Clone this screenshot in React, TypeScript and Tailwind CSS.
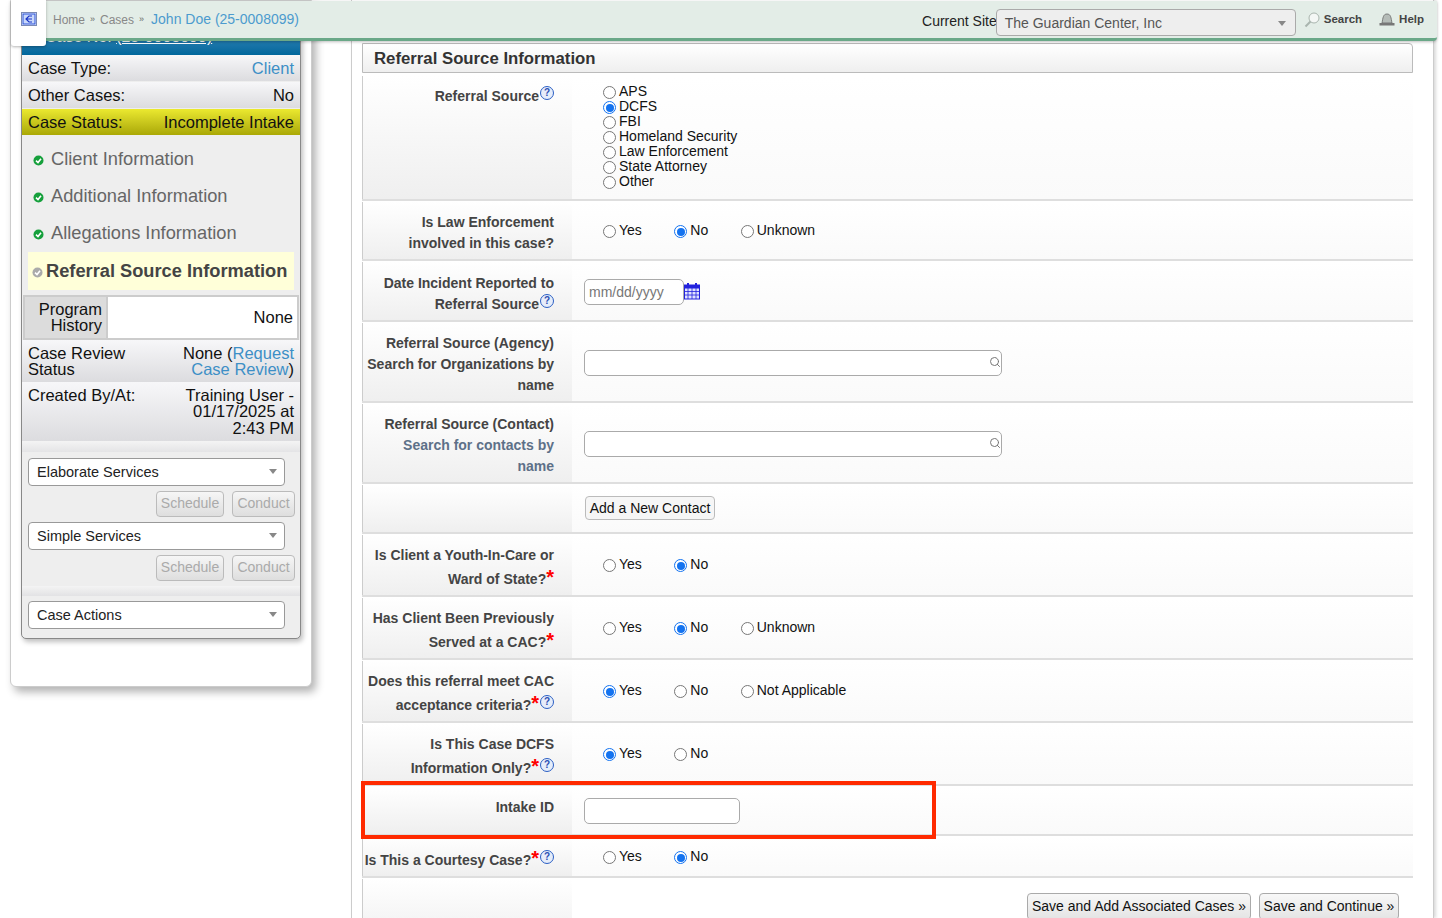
import React from "react";
import { Search } from "lucide-react";

const font = { fontFamily: '"Liberation Sans", Arial, sans-serif' };

function Radio({ on }: { on?: boolean }) {
  return on ? (
    <span className="inline-flex w-[13px] h-[13px] shrink-0 rounded-full bg-white border border-[#1473f0] items-center justify-center">
      <span className="block w-[8px] h-[8px] rounded-full bg-[#1473f0]" />
    </span>
  ) : (
    <span className="inline-block w-[13px] h-[13px] shrink-0 rounded-full bg-white border border-[#777]" />
  );
}

function Opt({ label, on }: { label: string; on?: boolean }) {
  return (
    <span className="flex items-center gap-[3px] text-[14px] leading-[15px] text-[#111]">
      <span className="mt-[2px] flex"><Radio on={on} /></span>
      {label}
    </span>
  );
}

function Options({ items, on, className }: { items: string[]; on: string; className: string }) {
  return (
    <div className={"flex gap-[32.5px] pl-[31px] " + className}>
      {items.map((i) => (
        <Opt key={i} label={i} on={i === on} />
      ))}
    </div>
  );
}

function HelpIcon() {
  return (
    <span className="inline-flex align-top ml-[1px] w-[14px] h-[14px] rounded-full border border-[#2b5fc4] bg-[#e6edfa] text-[#2b4fb4] text-[10px] leading-[12px] font-bold items-center justify-center">
      ?
    </span>
  );
}

function Star() {
  return <span className="inline-block align-top text-[#f00] text-[20px] leading-[16px] font-bold">*</span>;
}

function Row({ h, label, children }: { h: string; label: React.ReactNode; children?: React.ReactNode }) {
  return (
    <div className={"flex border-b-2 border-[#dedede] pt-[1px] " + h}>
      <div className="w-[210px] shrink-0 border-l border-[#ccc] bg-gradient-to-b from-white to-[#efefef] text-right pr-[18px] pl-[1px] text-[14px] leading-[21px] font-bold text-[#444] whitespace-nowrap">
        {label}
      </div>
      <div className="flex-1 bg-gradient-to-b from-white to-[#fafafa] relative">{children}</div>
    </div>
  );
}

function TextBox({ w, className = "", search }: { w: string; className?: string; search?: boolean }) {
  return (
    <div className={"relative ml-[12px] h-[26px] bg-white border border-[#aaa] rounded-[5px] " + w + " " + className}>
      {search && <Search className="absolute right-[0px] top-[5px] w-[12px] h-[12px] text-[#777]" strokeWidth={2} />}
    </div>
  );
}

function Sel({ label }: { label: string }) {
  return (
    <div className="ml-[6px] w-[257px] h-[28px] pt-[2px] bg-white border border-[#999] rounded-[4px] flex items-center justify-between pl-[8px] pr-[7px] text-[14.5px] text-[#222]">
      {label}
      <span className="-mt-[2px] w-0 h-0 border-l-[4px] border-r-[4px] border-t-[5px] border-l-transparent border-r-transparent border-t-[#888]" />
    </div>
  );
}

function DisabledBtns() {
  return (
    <div className="flex justify-end gap-[8px] mt-[5px] pr-[5px]">
      <span className="h-[26px] w-[68px] flex items-center justify-center border border-[#bbb] rounded-[4px] bg-gradient-to-b from-[#f6f6f6] to-[#dedede] text-[14px] text-[#aaa]">Schedule</span>
      <span className="h-[26px] w-[63px] flex items-center justify-center border border-[#bbb] rounded-[4px] bg-gradient-to-b from-[#f6f6f6] to-[#dedede] text-[14px] text-[#aaa]">Conduct</span>
    </div>
  );
}

function Check({ gray }: { gray?: boolean }) {
  return (
    <svg width="11" height="11" viewBox="0 0 11 11" className="shrink-0 mt-[4px]">
      <circle cx="5.5" cy="5.5" r="5" fill={gray ? "#aaa" : "#16a03c"} />
      <path d="M3 5.6 L5 7.5 L8 3.8" fill="none" stroke="#fff" strokeWidth="1.6" />
    </svg>
  );
}

function Nav({ label }: { label: string }) {
  return (
    <div className="h-[37.2px] pl-[11px] flex items-center gap-[7px] text-[18.25px] text-[#666]">
      <Check />
      {label}
    </div>
  );
}

const grey = "bg-gradient-to-b from-[#f7f7f9] to-[#dcdcdf]";

function InfoRow({ l, r }: { l: string; r: React.ReactNode }) {
  return (
    <div className={"h-[26px] mb-[1px] pt-[1px] flex items-center justify-between px-[6px] text-[16.5px] text-[#111] " + grey}>
      <span>{l}</span>
      {r}
    </div>
  );
}

function SidePanel() {
  return (
    <div className="w-[302px] ml-[10px] h-[687px] shrink-0 bg-white border border-[#ccc] rounded-b-[6px] shadow-[4px_5px_8px_rgba(0,0,0,0.3)] pt-[29px] px-[10px]">
      <div className="w-[280px] h-[609px] border border-[#888] rounded-[5px] bg-[#eee] shadow-[2px_3px_5px_rgba(0,0,0,0.25)] overflow-hidden">
        <div className="h-[24px] pl-[23px] bg-gradient-to-b from-[#2e86b8] to-[#00679c] text-white text-[16px] leading-[12px]">
          Case No: <span className="underline">(25-0008099)</span>
        </div>
        <InfoRow l="Case Type:" r={<span className="text-[#3d8fc6]">Client</span>} />
        <InfoRow l="Other Cases:" r={<span>No</span>} />
        <div className="h-[26px] pt-[1px] flex items-center justify-between px-[6px] text-[16.5px] text-[#111] bg-gradient-to-b from-[#ebe92f] to-[#aaa805]">
          <span>Case Status:</span>
          <span>Incomplete Intake</span>
        </div>
        <div className="pt-[5px]">
          <Nav label="Client Information" />
          <Nav label="Additional Information" />
          <Nav label="Allegations Information" />
        </div>
        <div className="ml-[6px] mr-[6px] h-[38px] mb-[5px] bg-[#ffffd9] pl-[4px] flex items-center gap-[3px] text-[18.25px] font-bold text-[#444]">
          <Check gray />
          Referral Source Information
        </div>
        <div className="mx-[1px] h-[45px] flex border-2 border-[#ccc] text-[16.5px] leading-[16px] text-[#111]">
          <div className="w-[81px] bg-[#dcdcdc] text-right pr-[4px] flex items-center justify-end">
            <span>Program<br />History</span>
          </div>
          <div className="flex-1 bg-white flex items-center justify-end pr-[4px] border-l-2 border-[#ccc]">None</div>
        </div>
        <div className={"h-[42px] pt-[5px] flex justify-between px-[6px] text-[16.5px] leading-[16px] text-[#111] " + grey}>
          <span>Case Review<br />Status</span>
          <span className="text-right">None (<span className="text-[#3d8fc6]">Request</span><br /><span className="text-[#3d8fc6]">Case Review</span>)</span>
        </div>
        <div className={"h-[59px] pt-[5px] flex justify-between px-[6px] text-[16.5px] leading-[16.5px] text-[#111] " + grey}>
          <span>Created By/At:</span>
          <span className="text-right">Training User -<br />01/17/2025 at<br />2:43 PM</span>
        </div>
        <div className="h-[11px] bg-gradient-to-b from-[#f4f4f4] to-[#e4e4e6] mb-[6px]" />
        <Sel label="Elaborate Services" />
        <DisabledBtns />
        <div className="h-[5px]" />
        <Sel label="Simple Services" />
        <DisabledBtns />
        <div className="h-[10px] mt-[5px] mb-[5px] bg-gradient-to-b from-[#f4f4f4] to-[#e2e2e4]" />
        <Sel label="Case Actions" />
      </div>
    </div>
  );
}

function TopBar() {
  return (
    <>
      <div className="absolute left-[11px] top-0 w-[35px] h-[46px] bg-white rounded-b-[3px] shadow-[0_1px_3px_rgba(0,0,0,0.3)] z-20 flex items-start justify-center pt-[12px]">
        <svg width="16" height="14" viewBox="0 0 16 14">
          <rect x="0.5" y="0.5" width="15" height="13" fill="#e6ecfc" stroke="#7a8ab5" />
          <rect x="2" y="2" width="12" height="10" fill="#c9d8fa" stroke="#2a52d8" />
          <path d="M11 4 H8 L5 7 L8 10 H11 M5 7 H11" fill="none" stroke="#1a34c8" strokeWidth="1.2" />
        </svg>
      </div>
      <div className="absolute left-[40px] top-[1px] w-[1397px] h-[40px] bg-[#e3ede7] border-b-[3px] border-[#6aa888] rounded-br-[4px] shadow-[0_1px_3px_rgba(0,0,0,0.25)] z-10 flex items-center justify-between pl-[13px] pr-[13px]">
        <div className="flex items-center gap-[5px] text-[12px] text-[#888]">
          <span>Home</span>
          <span className="text-[9px] text-[#666]">»</span>
          <span>Cases</span>
          <span className="text-[9px] text-[#666]">»</span>
          <span className="ml-[2px] text-[14px] text-[#4c9bce]">John Doe (25-0008099)</span>
        </div>
        <div className="flex items-center">
          <span className="mt-[4px] -mr-[1px] text-[14px] text-[#222]">Current Site</span>
          <div className="w-[300px] h-[27px] mt-[6px] pt-[1px] bg-[#eee] border border-[#aaa] rounded-[4px] flex items-center justify-between pl-[8px] pr-[9px] text-[14px] text-[#555]">
            The Guardian Center, Inc
            <span className="w-0 h-0 border-l-[4px] border-r-[4px] border-t-[5px] border-l-transparent border-r-transparent border-t-[#888]" />
          </div>
          <svg width="16" height="16" viewBox="0 0 16 16" className="ml-[8px]">
            <circle cx="10" cy="6" r="5" fill="#f4f7f5" stroke="#a9b5ae" />
            <path d="M6.5 9.5 L1.5 14.5" stroke="#a9b5ae" strokeWidth="2" />
          </svg>
          <span className="ml-[4px] text-[11.5px] font-bold text-[#444]">Search</span>
          <svg width="16" height="13" viewBox="0 0 16 13" className="ml-[17px]">
            <path d="M8 1 C4 1 4 5 3 10 H13 C12 5 12 1 8 1 Z" fill="#b5bcb8" stroke="#666" strokeWidth="0.8" />
            <rect x="0.5" y="10" width="15" height="2.5" fill="#777" />
          </svg>
          <span className="ml-[4px] text-[11.5px] font-bold text-[#444]">Help</span>
        </div>
      </div>
    </>
  );
}

function MainPanel() {
  return (
    <div className="w-[1083px] ml-[39px] h-[918px] shrink-0 bg-white border-x border-[#ccc] shadow-[2px_0_3px_rgba(0,0,0,0.15)] pt-[43px] pl-[10px]">
      <div className="w-[1051px]">
        <div className="h-[30px] pt-[1px] mb-[2px] flex items-center pl-[11px] border border-[#bbb] rounded-tr-[4px] bg-gradient-to-b from-white to-[#efefef] text-[16.75px] font-bold text-[#333]">
          Referral Source Information
        </div>
        <Row h="h-[126px]" label={<div className="pt-[10px]">Referral Source<HelpIcon /></div>}>
          <div className="pl-[31px] pt-[8px] flex flex-col">
            <Opt label="APS" />
            <Opt label="DCFS" on />
            <Opt label="FBI" />
            <Opt label="Homeland Security" />
            <Opt label="Law Enforcement" />
            <Opt label="State Attorney" />
            <Opt label="Other" />
          </div>
        </Row>
        <Row h="h-[60px]" label={<div className="pt-[10px]">Is Law Enforcement<br />involved in this case?</div>}>
          <Options className="pt-[21px]" items={["Yes", "No", "Unknown"]} on="No" />
        </Row>
        <Row h="h-[61px]" label={<div className="pt-[11px]">Date Incident Reported to<br />Referral Source<HelpIcon /></div>}>
          <div className="flex items-start pt-[17px]">
            <div className="ml-[12px] w-[100px] h-[26px] bg-white border border-[#aaa] rounded-[5px] text-[14px] text-[#777] pl-[4px] leading-[25px]">mm/dd/yyyy</div>
            <svg width="16" height="18" viewBox="0 0 16 18" className="mt-[3px]">
              <rect x="0.5" y="3" width="15" height="14" fill="#dfe3ff" stroke="#2222dd" />
              <rect x="0.5" y="3" width="15" height="3.5" fill="#2222dd" />
              <path d="M4 1 V5 M12 1 V5" stroke="#2222dd" strokeWidth="2" />
              <path d="M0.5 9.5 H15.5 M0.5 13 H15.5 M4 6 V17 M8 6 V17 M12 6 V17" stroke="#2222dd" strokeWidth="0.8" />
            </svg>
          </div>
        </Row>
        <Row h="h-[81px]" label={<div className="pt-[10px]">Referral Source (Agency)<br />Search for Organizations by<br />name</div>}>
          <TextBox w="w-[418px]" className="mt-[27px]" search />
        </Row>
        <Row h="h-[81px]" label={<div className="pt-[10px]">Referral Source (Contact)<br /><span className="text-[#5d7088]">Search for contacts by<br />name</span></div>}>
          <TextBox w="w-[418px]" className="mt-[27px]" search />
        </Row>
        <Row h="h-[50px]" label="">
          <div className="ml-[13px] mt-[11px] w-[130px] h-[24px] flex items-center justify-center border border-[#bbb] rounded-[4px] bg-[#f6f6f6] text-[14px] text-[#111]">Add a New Contact</div>
        </Row>
        <Row h="h-[63px]" label={<div className="pt-[10px]">Is Client a Youth-In-Care or<div className="mt-[3px]">Ward of State?<Star /></div></div>}>
          <Options className="pt-[22px]" items={["Yes", "No"]} on="No" />
        </Row>
        <Row h="h-[63px]" label={<div className="pt-[10px]">Has Client Been Previously<div className="mt-[3px]">Served at a CAC?<Star /></div></div>}>
          <Options className="pt-[22px]" items={["Yes", "No", "Unknown"]} on="No" />
        </Row>
        <Row h="h-[63px]" label={<div className="pt-[10px]">Does this referral meet CAC<div className="mt-[3px]">acceptance criteria?<Star /><HelpIcon /></div></div>}>
          <Options className="pt-[22px]" items={["Yes", "No", "Not Applicable"]} on="Yes" />
        </Row>
        <Row h="h-[63px]" label={<div className="pt-[10px]">Is This Case DCFS<div className="mt-[3px]">Information Only?<Star /><HelpIcon /></div></div>}>
          <Options className="pt-[22px]" items={["Yes", "No"]} on="Yes" />
        </Row>
        <Row h="h-[50px]" label={<div className="pt-[10px]">Intake ID</div>}>
          <TextBox w="w-[156px]" className="mt-[11px]" />
        </Row>
        <Row h="h-[42px]" label={<div className="pt-[13px]">Is This a Courtesy Case?<Star /><HelpIcon /></div>}>
          <Options className="pt-[12px]" items={["Yes", "No"]} on="No" />
        </Row>
        <div className="flex pt-[1px] h-[42px]">
          <div className="w-[210px] shrink-0 border-l border-[#ccc] bg-gradient-to-b from-white to-[#f5f5f5]" />
          <div className="flex-1 flex justify-end gap-[8px] pr-[14px] pt-[14px]">
            <span className="h-[27px] w-[224px] flex items-center justify-center border border-[#aaa] rounded-[4px] bg-gradient-to-b from-[#f8f8f8] to-[#e4e4e4] text-[14px] text-[#111]">Save and Add Associated Cases »</span>
            <span className="h-[27px] w-[140px] flex items-center justify-center border border-[#aaa] rounded-[4px] bg-gradient-to-b from-[#f8f8f8] to-[#e4e4e4] text-[14px] text-[#111]">Save and Continue »</span>
          </div>
        </div>
      </div>
    </div>
  );
}

export default function App() {
  return (
    <div className="relative w-[1442px] h-[918px] overflow-hidden bg-white flex items-start" style={font}>
      <SidePanel />
      <MainPanel />
      <TopBar />
      <div className="absolute left-[361px] top-[781px] w-[575px] h-[58px] border-[4px] border-[#ff2a00] z-10" />
    </div>
  );
}
